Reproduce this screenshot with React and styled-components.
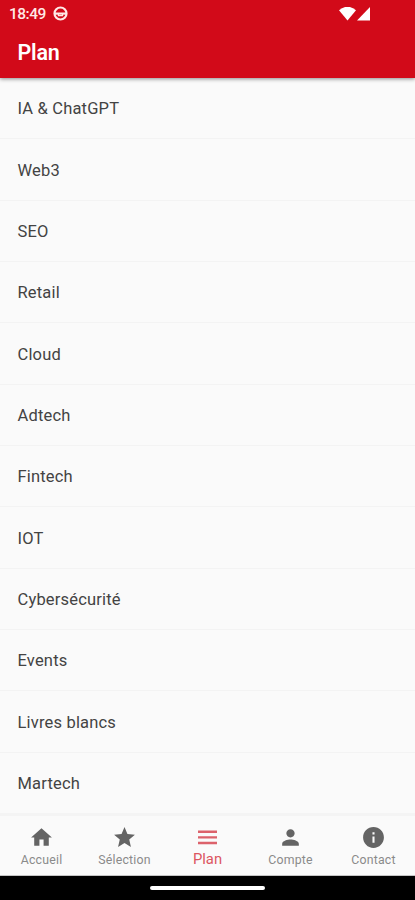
import React from "react";
import styled, { createGlobalStyle } from "styled-components";
import { MdHome, MdStar, MdPerson, MdInfo } from "react-icons/md";

const GlobalStyle = createGlobalStyle`
  * {
    box-sizing: border-box;
  }

  body {
    margin: 0;
    background-color: #fafafa;
    font-family: Roboto, "Liberation Sans", sans-serif;
  }
`;

const Screen = styled.div`
  display: flex;
  flex-direction: column;
  width: 100%;
  height: 100vh;
  overflow: hidden;
  background-color: #fafafa;
`;

const Header = styled.header`
  position: relative;
  flex: 0 0 78px;
  background-color: #d20a19;
  color: #ffffff;
  box-shadow: 0 1px 4px rgba(0, 0, 0, 0.45);
`;

const StatusBar = styled.div`
  display: flex;
  align-items: center;
  justify-content: space-between;
  height: 27px;
  padding: 0 45px 0 9px;
`;

const StatusGroup = styled.div`
  display: flex;
  align-items: center;
  gap: ${(props) => props.$gap}px;

  svg {
    display: block;
  }
`;

const Clock = styled.span`
  padding-top: 1px;
  font-size: 15.5px;
  font-weight: 500;
  line-height: 26px;
  color: #ffe9e6;
  letter-spacing: -0.5px;
`;

const Title = styled.h1`
  margin: 0;
  padding: 1px 0 0 17.5px;
  font-size: 21.5px;
  font-weight: 600;
  line-height: 50px;
  letter-spacing: -0.2px;
`;

const List = styled.ul`
  flex: 1;
  margin: 0;
  padding: 0;
  list-style: none;
  overflow: hidden;
`;

const ListItem = styled.li`
  display: flex;
  align-items: center;
  height: 61.33px;
  padding: 1.4px 0 0 17.5px;
  border-bottom: 1px solid #f3f3f3;
  color: #434343;
  font-size: 16.5px;
  letter-spacing: 0.18px;

  &:last-child {
    border-bottom: none;
  }
`;

const TabBar = styled.nav`
  display: flex;
  flex: 0 0 63px;
  border-top: 3px solid #f4f4f4;
  border-bottom: 1px solid #c4c4c4;
`;

const Tab = styled.div`
  display: flex;
  flex: 1;
  flex-direction: column;
  align-items: center;
  padding-top: 9px;
  color: ${(props) => (props.$active ? "#dc626b" : "#646464")};

  svg {
    display: block;
    width: 25px;
    height: 25px;
  }
`;

const TabLabel = styled.span`
  margin-top: ${(props) => (props.$active ? 1 : 2)}px;
  font-size: ${(props) => (props.$active ? 14.8 : 12.3)}px;
  line-height: 16px;
  letter-spacing: ${(props) => (props.$active ? 0 : 0.22)}px;
  color: ${(props) => (props.$active ? "#dc5560" : "#8a8a8a")};
`;

const GestureBar = styled.div`
  display: flex;
  flex: 0 0 24px;
  align-items: center;
  justify-content: center;
  padding-bottom: 1px;
  background-color: #000000;
`;

const GestureHandle = styled.div`
  width: 115px;
  height: 4px;
  border-radius: 2px;
  background-color: #ffffff;
`;

const WheelIcon = () => (
  <svg width="15" height="15" viewBox="0 0 15 15" fill="none" stroke="#ffe9e6">
    <circle cx="7.5" cy="7.5" r="6" strokeWidth="2.2" />
    <path d="M1.5 7.6H13.5" strokeWidth="2.2" />
    <path d="M5.4 8V9.6H9.6V8" strokeWidth="1.2" />
  </svg>
);

const WifiIcon = () => (
  <svg width="17" height="14" viewBox="0 0 17 14" fill="#ffffff">
    <path d="M0 3.3Q8.5 -3.9 17 3.3L8.5 13.5Z" />
  </svg>
);

const SignalIcon = () => (
  <svg width="13" height="14" viewBox="0 0 13 14" fill="#ffffff">
    <path d="M13 0V13.5H0Z" />
  </svg>
);

const LinesIcon = () => (
  <svg viewBox="0 0 25 25" fill="none" stroke="currentColor" strokeWidth="2.4">
    <path d="M3 6.7H22M3 12.4H22M3 18H22" />
  </svg>
);

const categories = [
  "IA & ChatGPT",
  "Web3",
  "SEO",
  "Retail",
  "Cloud",
  "Adtech",
  "Fintech",
  "IOT",
  "Cybersécurité",
  "Events",
  "Livres blancs",
  "Martech",
];

const tabs = [
  { label: "Accueil", Icon: MdHome },
  { label: "Sélection", Icon: MdStar },
  { label: "Plan", Icon: LinesIcon, active: true },
  { label: "Compte", Icon: MdPerson },
  { label: "Contact", Icon: MdInfo },
];

const App = () => {
  return (
    <Screen>
      <GlobalStyle />
      <Header>
        <StatusBar>
          <StatusGroup $gap={7}>
            <Clock>18:49</Clock>
            <WheelIcon />
          </StatusGroup>
          <StatusGroup $gap={1}>
            <WifiIcon />
            <SignalIcon />
          </StatusGroup>
        </StatusBar>
        <Title>Plan</Title>
      </Header>
      <List>
        {categories.map((category) => (
          <ListItem key={category}>{category}</ListItem>
        ))}
      </List>
      <TabBar>
        {tabs.map(({ label, Icon, active }) => (
          <Tab key={label} $active={active}>
            <Icon />
            <TabLabel $active={active}>{label}</TabLabel>
          </Tab>
        ))}
      </TabBar>
      <GestureBar>
        <GestureHandle />
      </GestureBar>
    </Screen>
  );
};

export default App;
